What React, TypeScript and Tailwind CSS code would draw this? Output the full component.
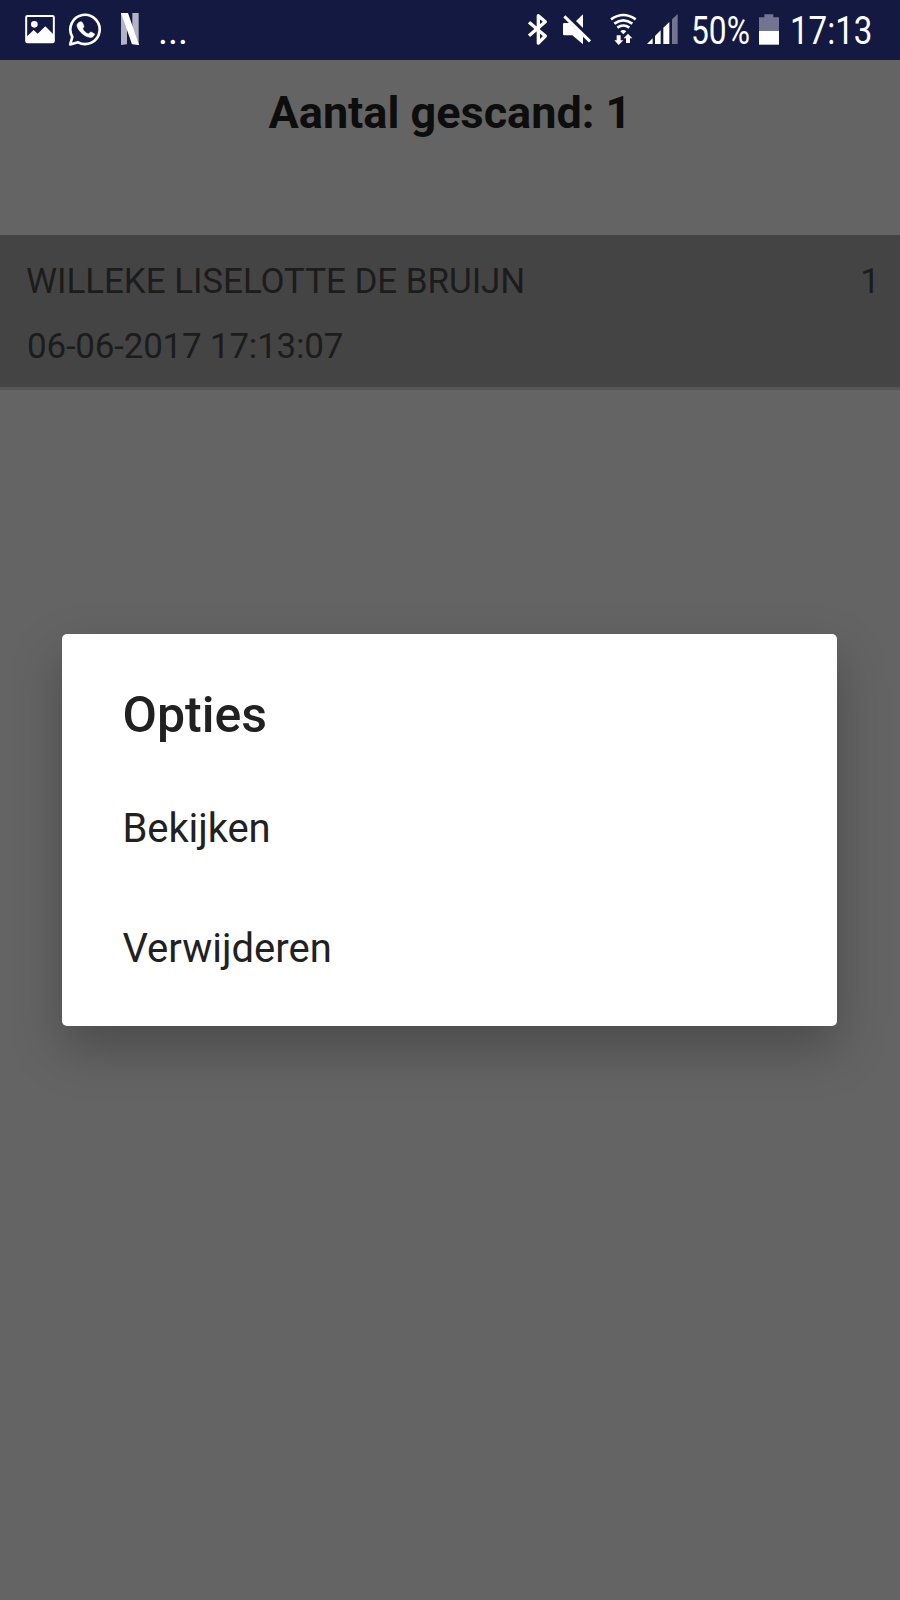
import React from "react";

function GalleryIcon() {
  return (
    <svg className="h-[60px] w-8 shrink-0" viewBox="72 0 96 180">
      <rect x="78.500" y="48" width="83" height="79" rx="4" fill="none" stroke="#fff" strokeWidth="6" />
      <circle cx="103" cy="73" r="10" fill="#fff" />
      <path d="M79 111 L101 90 L113 101 L136 79 L162 105 V126 H79 Z" fill="#fff" />
    </svg>
  );
}

function ChatIcon() {
  return (
    <svg className="ml-3 h-[60px] w-[34px] shrink-0" viewBox="204 0 102 180">
      <path
        d="M210.500 133.500 L217 110.500 A44 44 0 1 1 234 127 Z"
        fill="none"
        stroke="#fff"
        strokeWidth="8"
        strokeLinejoin="round"
      />
      <path
        d="M239 66 C242 64 246 65 247.500 68 L252 78 C253 81 249 84 248 86.500 C252 94 258 99 265 102 C268 99 270 96 273 96 L283 101 C286 102.500 280 110 276 111.500 C268 114 257 109 249 103 C240 96 231 84 231 76 C231 71 236 67 239 66 Z"
        fill="#fff"
        stroke="#fff"
        strokeWidth="1.500"
      />
    </svg>
  );
}

function StreamIcon() {
  return (
    <svg className="ml-4 h-[60px] w-6 shrink-0" viewBox="354 0 72 180">
      <path d="M363 39 H381 V133 L363 135 Z M397 39 H416 V135 L397 132 Z" fill="#b3b3c6" />
      <path d="M363 39 H384 L417 135 C409 134 403 133 396 133 Z" fill="#fff" />
    </svg>
  );
}

function BluetoothIcon() {
  return (
    <svg className="h-[60px] w-[22px] shrink-0" viewBox="81 0 66 180">
      <path
        d="M87 67 L136 108 L115 129 V47 L136 65 L87 107"
        fill="none"
        stroke="#fff"
        strokeWidth="10"
        strokeLinejoin="round"
      />
    </svg>
  );
}

function MutedIcon() {
  return (
    <svg className="ml-[13px] h-[60px] w-[30px] shrink-0" viewBox="186 0 90 180">
      <path d="M189 72 Q189 69 193 69 H208 L249 108 V133 L217 106 H193 Q189 106 189 102 Z" fill="#fff" />
      <path d="M228 63 L249 43 V84 Z" fill="#fff" />
      <path d="M193 49 L270 124" stroke="#fff" strokeWidth="9" />
    </svg>
  );
}

function WifiIcon() {
  return (
    <svg className="ml-[17px] h-[60px] w-[29px] shrink-0" viewBox="327 0 87 180">
      <g fill="none" stroke="#fff" strokeWidth="8">
        <path d="M333 58 Q370 32 407 58" />
        <path d="M343 71 Q370 51 397 71" />
        <path d="M352 83 Q370 70 388 83" />
      </g>
      <path d="M361 94 Q370 86 379 94 L370 103 Z" fill="#fff" />
      <path d="M350 106 H362 V121 H370 L356 135 L343 121 H350 Z" fill="#fff" />
      <path d="M384 101 L397 115 H390 V129 H378 V115 H371 Z" fill="#fff" />
    </svg>
  );
}

function SignalIcon() {
  return (
    <svg className="ml-2 h-[60px] w-[33px] shrink-0" viewBox="438 0 99 180">
      <path d="M441 132 L458 115 V132 Z M465 108 L482 91 V132 H465 Z M490 83 L508 66 V132 H490 Z" fill="#fff" />
      <path d="M516 58 L533 42 V132 H516 Z" fill="#727490" />
    </svg>
  );
}

function BatteryIcon() {
  return (
    <svg className="h-[60px] w-[22px] shrink-0" viewBox="234 0 66 180">
      <path d="M237 52 H253 V43 H280 V52 H297 V93 H237 Z" fill="#727490" />
      <path d="M237 93 H297 V134 H237 Z" fill="#fff" />
    </svg>
  );
}

function StatusBar() {
  return (
    <header className="flex h-[60px] items-center justify-between bg-[#141941] text-[38px] leading-[60px] text-white">
      <div className="flex items-center pl-6">
        <GalleryIcon />
        <ChatIcon />
        <StreamIcon />
        <span className="ml-4 h-[60px] pt-px">...</span>
      </div>
      <div className="flex w-[373px] items-center">
        <BluetoothIcon />
        <MutedIcon />
        <WifiIcon />
        <SignalIcon />
        <span className="ml-3 h-[60px] w-[67px] pt-px">
          <span className="inline-block origin-left scale-x-[0.835]">50%</span>
        </span>
        <BatteryIcon />
        <span className="ml-2.5 h-[60px] w-[91px] pt-px">
          <span className="inline-block origin-left scale-x-[0.87]">17:13</span>
        </span>
      </div>
    </header>
  );
}

function ScanRow({ name, time, count }: { name: string; time: string; count: number }) {
  return (
    <li className="flex h-[155px] justify-between border-b-[3px] border-[#565656] bg-[#444444] pt-[27px] pr-5 pl-[26px] text-[35px] leading-10 text-[#1c1c1c]">
      <div className="flex flex-col gap-[25px]">
        <span className="tracking-[-0.07px]">{name}</span>
        <span className="pl-px tracking-[-0.22px]">{time}</span>
      </div>
      <span>{count}</span>
    </li>
  );
}

function OptionsDialog() {
  return (
    <div className="absolute inset-0 flex items-start justify-center pt-[634px] pr-px">
      <div
        role="dialog"
        className="h-[392px] w-[775px] rounded-[5px] bg-white pt-[51px] pl-[60.500px] text-[#212121] shadow-[0_22px_50px_rgba(0,0,0,0.25)]"
      >
        <h2 className="text-[50px] leading-[60px] font-medium">Opties</h2>
        <ul className="pt-6 text-[40px] leading-[120px]">
          <li className="tracking-[-0.1px]">Bekijken</li>
          <li>Verwijderen</li>
        </ul>
      </div>
    </div>
  );
}

export default function App() {
  return (
    <div className="relative h-[1600px] w-[900px] overflow-hidden bg-[#646464] font-['Roboto',sans-serif]">
      <StatusBar />
      <main>
        <h1 className="h-[175px] pt-[26px] text-center text-[45px] leading-[54px] font-bold text-[#0d0d0d]">
          Aantal gescand: 1
        </h1>
        <ul>
          <ScanRow name="WILLEKE LISELOTTE DE BRUIJN" time="06-06-2017 17:13:07" count={1} />
        </ul>
      </main>
      <OptionsDialog />
    </div>
  );
}
